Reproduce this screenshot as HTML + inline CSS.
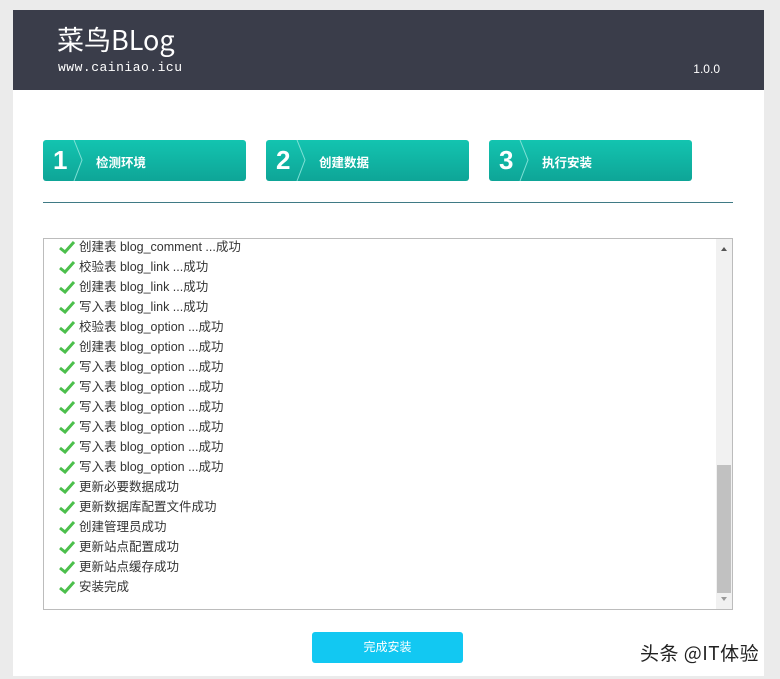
<!DOCTYPE html>
<html><head><meta charset="utf-8"><style>
body{margin:0;width:780px;height:679px;background:#ebebeb;font-family:"Liberation Sans","Noto Sans CJK SC",sans-serif;overflow:hidden;position:relative}
.page{position:absolute;left:13px;top:10px;width:751px;height:666px;background:#fff}
.hd{position:absolute;left:0;top:0;width:751px;height:80px;background:#3a3d4a;color:#fff}
.t{position:absolute;left:44px;top:12px;font-size:27px;font-family:"Noto Sans CJK SC",sans-serif;line-height:34px}
.u{position:absolute;left:45px;top:50px;font-size:13px;font-family:"Liberation Mono",monospace;letter-spacing:0.5px}
.v{position:absolute;right:44px;top:52px;font-size:12px}
.st{position:absolute;top:130px;width:203px;height:41px;border-radius:3px;background:linear-gradient(#13c4b0,#0ea597);color:#fff}
.st b{position:absolute;left:10px;top:5px;font-size:26px;font-family:"Liberation Sans",sans-serif}
.st svg{position:absolute;left:30px;top:0}
.st span{position:absolute;left:53px;top:12px;font-size:12.5px;font-weight:bold}
.line{position:absolute;left:30px;top:192px;width:690px;height:1px;background:#3f7a85}
.log{position:absolute;left:30px;top:228px;width:688px;height:370px;border:1px solid #bcbcbc;overflow:hidden}
.in{position:absolute;left:0;top:-2px}
.row{height:20px;line-height:20px;font-size:12.5px;color:#333;padding-left:15px;position:relative;white-space:nowrap}
.row svg{vertical-align:middle;margin-right:4px;position:relative;top:-1px}
.sb{position:absolute;right:0;top:0;width:16px;height:370px;background:#f1f1f1}
.th{position:absolute;left:1px;top:226px;width:14px;height:128px;background:#c1c1c1}
.btn{position:absolute;left:299px;top:622px;width:151px;height:31px;background:#12c8f2;border-radius:3px;color:#fff;font-size:12px;text-align:center;line-height:31px}
.wm{position:absolute;left:640px;top:639px;font-size:19px;color:#222;font-family:"Noto Sans CJK SC",sans-serif;letter-spacing:0.5px}
</style></head><body>
<div class="page">
<div class="hd"><div class="t">菜鸟BLog</div><div class="u">www.cainiao.icu</div><div class="v">1.0.0</div></div>
<div class="st" style="left:30px"><b>1</b><svg width="12" height="41"><path d="M1 0 L9 20 L1 41" stroke="#7fe0d6" fill="none"/></svg><span>检测环境</span></div>
<div class="st" style="left:253px"><b>2</b><svg width="12" height="41"><path d="M1 0 L9 20 L1 41" stroke="#7fe0d6" fill="none"/></svg><span>创建数据</span></div>
<div class="st" style="left:476px"><b>3</b><svg width="12" height="41"><path d="M1 0 L9 20 L1 41" stroke="#7fe0d6" fill="none"/></svg><span>执行安装</span></div>
<div class="line"></div>
<div class="log"><div class="in">
<div class="row"><svg width="16" height="14"><path d="M1 8 L6 12 L15 2" stroke="#4cbf4c" stroke-width="3" fill="none"/></svg>创建表 blog_comment ...成功</div>
<div class="row"><svg width="16" height="14"><path d="M1 8 L6 12 L15 2" stroke="#4cbf4c" stroke-width="3" fill="none"/></svg>校验表 blog_link ...成功</div>
<div class="row"><svg width="16" height="14"><path d="M1 8 L6 12 L15 2" stroke="#4cbf4c" stroke-width="3" fill="none"/></svg>创建表 blog_link ...成功</div>
<div class="row"><svg width="16" height="14"><path d="M1 8 L6 12 L15 2" stroke="#4cbf4c" stroke-width="3" fill="none"/></svg>写入表 blog_link ...成功</div>
<div class="row"><svg width="16" height="14"><path d="M1 8 L6 12 L15 2" stroke="#4cbf4c" stroke-width="3" fill="none"/></svg>校验表 blog_option ...成功</div>
<div class="row"><svg width="16" height="14"><path d="M1 8 L6 12 L15 2" stroke="#4cbf4c" stroke-width="3" fill="none"/></svg>创建表 blog_option ...成功</div>
<div class="row"><svg width="16" height="14"><path d="M1 8 L6 12 L15 2" stroke="#4cbf4c" stroke-width="3" fill="none"/></svg>写入表 blog_option ...成功</div>
<div class="row"><svg width="16" height="14"><path d="M1 8 L6 12 L15 2" stroke="#4cbf4c" stroke-width="3" fill="none"/></svg>写入表 blog_option ...成功</div>
<div class="row"><svg width="16" height="14"><path d="M1 8 L6 12 L15 2" stroke="#4cbf4c" stroke-width="3" fill="none"/></svg>写入表 blog_option ...成功</div>
<div class="row"><svg width="16" height="14"><path d="M1 8 L6 12 L15 2" stroke="#4cbf4c" stroke-width="3" fill="none"/></svg>写入表 blog_option ...成功</div>
<div class="row"><svg width="16" height="14"><path d="M1 8 L6 12 L15 2" stroke="#4cbf4c" stroke-width="3" fill="none"/></svg>写入表 blog_option ...成功</div>
<div class="row"><svg width="16" height="14"><path d="M1 8 L6 12 L15 2" stroke="#4cbf4c" stroke-width="3" fill="none"/></svg>写入表 blog_option ...成功</div>
<div class="row"><svg width="16" height="14"><path d="M1 8 L6 12 L15 2" stroke="#4cbf4c" stroke-width="3" fill="none"/></svg>更新必要数据成功</div>
<div class="row"><svg width="16" height="14"><path d="M1 8 L6 12 L15 2" stroke="#4cbf4c" stroke-width="3" fill="none"/></svg>更新数据库配置文件成功</div>
<div class="row"><svg width="16" height="14"><path d="M1 8 L6 12 L15 2" stroke="#4cbf4c" stroke-width="3" fill="none"/></svg>创建管理员成功</div>
<div class="row"><svg width="16" height="14"><path d="M1 8 L6 12 L15 2" stroke="#4cbf4c" stroke-width="3" fill="none"/></svg>更新站点配置成功</div>
<div class="row"><svg width="16" height="14"><path d="M1 8 L6 12 L15 2" stroke="#4cbf4c" stroke-width="3" fill="none"/></svg>更新站点缓存成功</div>
<div class="row"><svg width="16" height="14"><path d="M1 8 L6 12 L15 2" stroke="#4cbf4c" stroke-width="3" fill="none"/></svg>安装完成</div>
</div>
<div class="sb"><svg width="16" height="16" style="position:absolute;top:2px"><path d="M5 10 L8 6 L11 10Z" fill="#555"/></svg><div class="th"></div><svg width="16" height="16" style="position:absolute;bottom:2px"><path d="M5 6 L8 10 L11 6Z" fill="#999"/></svg></div>
</div>
<div class="btn">完成安装</div>
</div>
<div class="wm">头条 @IT体验</div>
</body></html>
